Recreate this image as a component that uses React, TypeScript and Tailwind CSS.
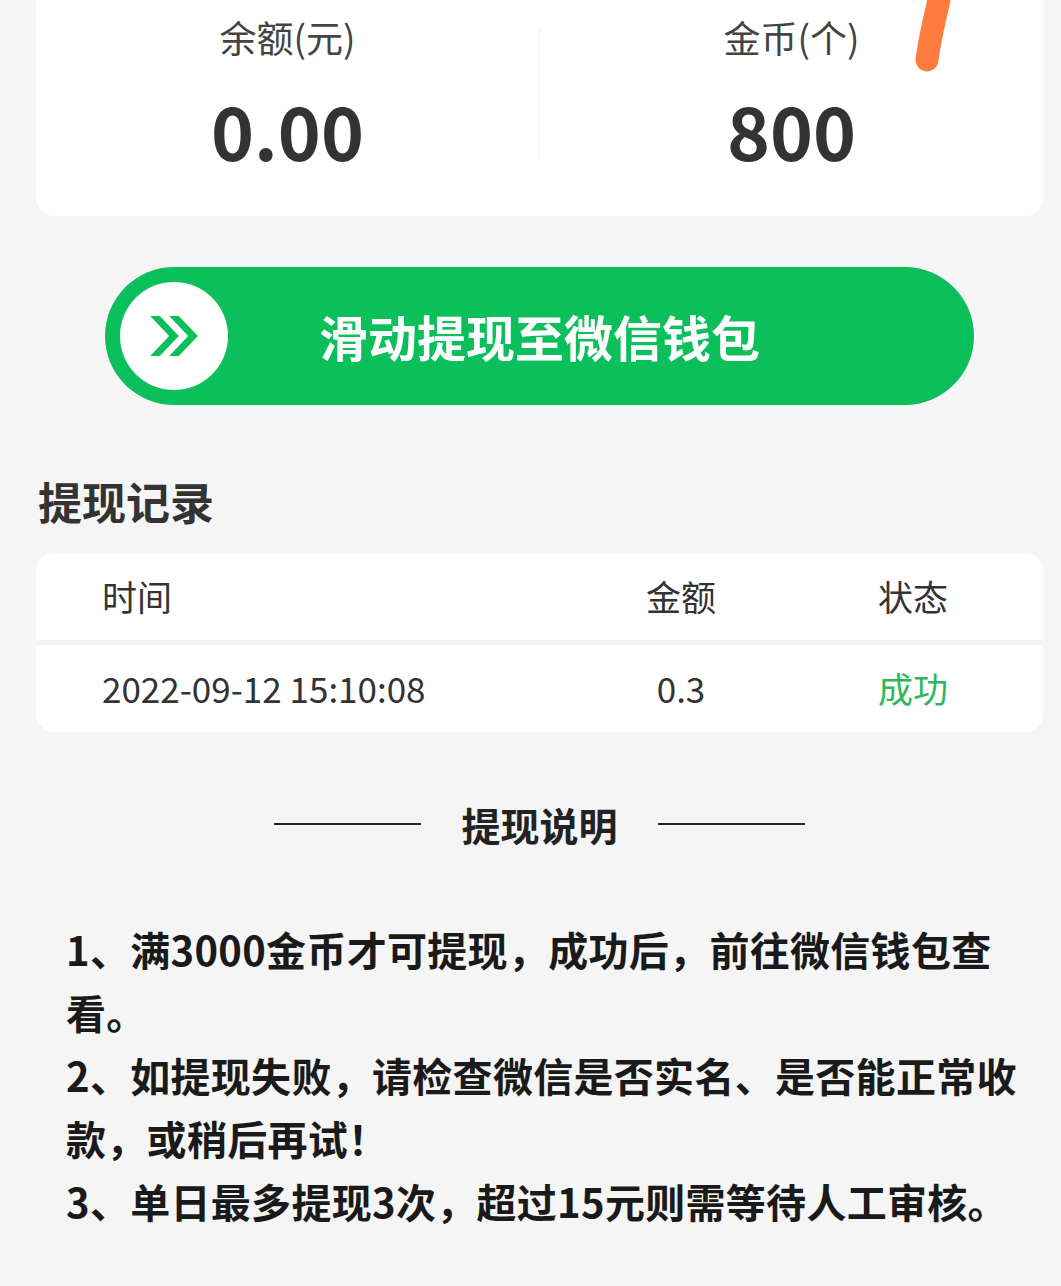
import React from "react";

const font = { fontFamily: '"Noto Sans CJK SC", "Noto Sans", sans-serif' };

function Chevrons() {
  return (
    <svg width="48" height="40" viewBox="0 0 50 42">
      <polygon points="0,0 10,0 30,21 10,42 0,42 20,21" fill="#0bbf5b" />
      <polygon points="20,0 30,0 50,21 30,42 20,42 40,21" fill="#0bbf5b" />
    </svg>
  );
}

export default function App() {
  return (
    <div
      className="relative min-h-screen w-full bg-[#f5f5f5] pb-[60px] text-[#333]"
      style={font}
    >
      {/* Top balance card */}
      <div className="ml-[36px] mr-[18px] flex h-[216px] rounded-b-[18px] bg-white">
        <div className="flex flex-1 flex-col items-center pt-[12px]">
          <div className="text-[37px] leading-[50px] text-[#444]">余额(元)</div>
          <div className="mt-[27px] text-[73px] font-bold leading-[80px] text-[#333]">0.00</div>
        </div>
        <div className="mt-[27px] h-[133px] w-px bg-[#f0f0f0]" />
        <div className="flex flex-1 flex-col items-center pt-[12px]">
          <div className="text-[37px] leading-[50px] text-[#444]">金币(个)</div>
          <div className="mt-[27px] text-[73px] font-bold leading-[80px] text-[#333]">800</div>
        </div>
      </div>

      {/* Orange annotation stroke */}
      <svg
        className="pointer-events-none absolute left-[900px] top-0"
        width="70"
        height="80"
        viewBox="0 0 70 80"
      >
        <path
          d="M41 -10 C 36 15, 30 35, 27 60"
          stroke="#ff7b3e"
          strokeWidth="23"
          strokeLinecap="round"
          fill="none"
        />
      </svg>

      {/* Slide button */}
      <div className="ml-[105px] mr-[87px] mt-[51px] flex h-[138px] items-center rounded-full bg-[#0bbf5b] pl-[15px] pr-[15px]">
        <div className="flex h-[108px] w-[108px] shrink-0 items-center justify-center rounded-full bg-white">
          <Chevrons />
        </div>
        <div className="flex-1 pr-[108px] text-center text-[49px] font-bold leading-[60px] text-white">
          滑动提现至微信钱包
        </div>
      </div>

      {/* Records title */}
      <div className="ml-[38px] mt-[66px] text-[44px] font-bold leading-[60px] text-[#333]">
        提现记录
      </div>

      {/* Records table */}
      <div className="ml-[36px] mr-[18px] mt-[22px] overflow-hidden rounded-[18px] bg-[#f3f3f3]">
        <div className="flex h-[87px] items-center bg-white text-[35px] text-[#333]">
          <div className="flex-1 pl-[66px]">时间</div>
          <div className="w-[120px] text-center">金额</div>
          <div className="ml-[112px] mr-[70px] w-[120px] text-center">状态</div>
        </div>
        <div className="mt-[5px] flex h-[87px] items-center bg-white text-[35px] text-[#333]">
          <div className="flex-1 pl-[66px]">2022-09-12 15:10:08</div>
          <div className="w-[120px] text-center">0.3</div>
          <div className="ml-[112px] mr-[70px] w-[120px] text-center text-[#2db85c]">成功</div>
        </div>
      </div>

      {/* Instructions title */}
      <div className="ml-[36px] mr-[18px] mt-[62px] flex items-center justify-center">
        <div className="h-[2px] w-[147px] bg-[#222]" />
        <div className="mx-[40px] text-[39px] font-bold leading-[60px] text-[#222]">提现说明</div>
        <div className="h-[2px] w-[147px] bg-[#222]" />
      </div>

      {/* Instructions */}
      <div className="ml-[66px] mt-[64px] whitespace-nowrap text-[40px] font-bold leading-[63px] tracking-[0.3px] text-[#1a1a1a]">
        <p>
          1、满3000金币才可提现，成功后，前往微信钱包查
          <br />
          看。
        </p>
        <p>
          2、如提现失败，请检查微信是否实名、是否能正常收
          <br />
          款，或稍后再试！
        </p>
        <p>3、单日最多提现3次，超过15元则需等待人工审核。</p>
      </div>
    </div>
  );
}
